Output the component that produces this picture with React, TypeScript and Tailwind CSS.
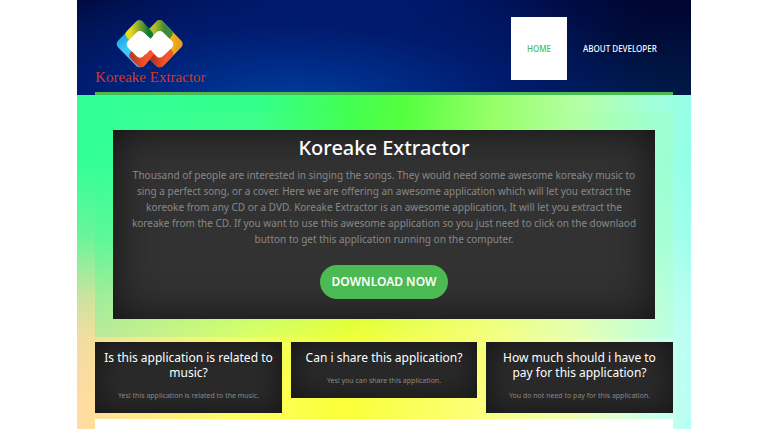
import React from "react";

const questions = [
  {
    title: "Is this application is related to music?",
    answer: "Yes! this application is related to the music.",
  },
  { title: "Can i share this application?", answer: "Yes! you can share this application." },
  {
    title: "How much should i have to pay for this application?",
    answer: "You do not need to pay for this application.",
  },
];

function Logo() {
  return (
    <a href="#home" className="mt-5 flex flex-col items-center" aria-label="Koreake Extractor">
      <svg viewBox="0 0 204 144" className="h-12 w-[68px]" aria-hidden="true">
        <defs>
          <linearGradient id="olive" x1="0" x2="1">
            <stop offset="0" stopColor="#e6dc1c" />
            <stop offset="0.55" stopColor="#78a030" />
            <stop offset="1" stopColor="#0d7a35" />
          </linearGradient>
          <linearGradient id="olive-right" x1="0" x2="1">
            <stop offset="0.2" stopColor="#b8c028" />
            <stop offset="0.8" stopColor="#3f8a34" />
          </linearGradient>
          <linearGradient id="sky" x1="0" x2="0.4" y1="0" y2="1">
            <stop offset="0.2" stopColor="#1e9bd4" />
            <stop offset="0.6" stopColor="#3cc8f8" />
          </linearGradient>
          <linearGradient id="red-left" x1="0" x2="1">
            <stop offset="0" stopColor="#c23a24" />
            <stop offset="0.7" stopColor="#f5552a" />
          </linearGradient>
          <linearGradient id="red-right" x1="0" x2="1">
            <stop offset="0.1" stopColor="#b83222" />
            <stop offset="0.8" stopColor="#f5552a" />
          </linearGradient>
          <linearGradient id="amber" x1="0" x2="1">
            <stop offset="0.6" stopColor="#ffc814" />
            <stop offset="1" stopColor="#e8a01c" />
          </linearGradient>
        </defs>
        <g strokeLinejoin="round" strokeWidth="28">
          <path d="M131 15L186 72L131 128L76 72Z" fill="url(#amber)" stroke="url(#amber)" />
          <path d="M131 15L156 40L131 74L104 42Z" fill="url(#olive-right)" stroke="url(#olive-right)" />
          <path d="M71 15L98 72L71 128L16 72Z" fill="url(#sky)" stroke="url(#sky)" />
          <path d="M131 74L158 101L131 128L104 101Z" fill="url(#red-right)" stroke="url(#red-right)" />
          <path d="M76 70L103 94L76 128L54 106Z" fill="url(#red-left)" stroke="url(#red-left)" />
          <path d="M70 15L97 44L71 74L43 43Z" fill="url(#olive)" stroke="url(#olive)" />
          <path d="M72 47L96 71L72 99L46 73Z" fill="#fff" stroke="#fff" />
          <path d="M131 47L158 73L131 99L108 73Z" fill="#fff" stroke="#fff" />
          <path d="M84 39L105 57L120 40V96L108 85L88 104Z" fill="#fff" />
        </g>
      </svg>
      <span className="font-['Liberation_Serif',serif] text-[15px] leading-[18px] text-[#d03a28]">
        Koreake Extractor
      </span>
    </a>
  );
}

function Header() {
  return (
    <header className="bg-[#000a38] bg-[radial-gradient(ellipse_62%_150%_at_35%_115%,#0042a0_0%,#002c88_30%,#001a6c_60%,#00105000_100%),radial-gradient(ellipse_50%_100%_at_44%_0%,#00186c_20%,#00105000_100%),linear-gradient(#000430,#001a48)] px-[3%]">
      <div className="flex justify-between border-b-[3px] border-[#4cba52] pb-1.5">
        <Logo />
        <nav className="mt-[17px] flex h-[63px] text-[8px] font-medium">
          <a href="#home" className="flex items-center bg-white px-4 text-[#4cba52]">
            HOME
          </a>
          <a href="#developer" className="flex items-center px-4 text-white">
            ABOUT DEVELOPER
          </a>
        </nav>
      </div>
    </header>
  );
}

function Hero() {
  return (
    <section className="mt-[17px] bg-[linear-gradient(90deg,#33ff9948,#66ff8830_25%,#ffff0000_45%,#ffff0000_70%,#a0ffa038)] px-[3%] py-[18px]">
      <div className="bg-[#323232] px-2.5 pt-1 pb-5 text-center shadow-[inset_0_0_40px_#121212]">
        <h1 className="text-[20px] leading-7 font-medium text-white">Koreake Extractor</h1>
        <p className="mt-[5px] text-[10px] leading-4 text-[#888]">
          Thousand of people are interested in singing the songs. They would need some awesome koreaky music to
          <br />
          sing a perfect song, or a cover. Here we are offering an awesome application which will let you extract the
          <br />
          koreoke from any CD or a DVD. Koreake Extractor is an awesome application, It will let you extract the
          <br />
          koreake from the CD. If you want to use this awesome application so you just need to click on the downlaod
          <br />
          button to get this application running on the computer.
        </p>
        <button
          type="button"
          className="mt-[18px] h-[34px] rounded-full bg-[#4cba52] px-3 text-[12px] font-semibold text-white"
        >
          DOWNLOAD NOW
        </button>
      </div>
    </section>
  );
}

export default function App() {
  return (
    <div className="min-h-screen bg-white font-['Noto_Sans',sans-serif]">
      <div className="mx-auto flex min-h-screen w-4/5 flex-col">
        <Header />
        <main className="relative isolate flex grow flex-col bg-[linear-gradient(95deg,#33ff99_0%,#33ff8c_28%,#44ff50_43%,#55ff40_51%,#98ff68_65%,#b4ffa4_78%,#a0ffdc_90%,#8cfff2_100%)] px-[3%] before:absolute before:inset-0 before:-z-10 before:bg-[linear-gradient(95deg,#ffd4aa_0%,#ffe690_12%,#ffff60_30%,#faff38_46%,#fcff74_65%,#f0ffb8_82%,#c8fff0_95%,#b8fff4_100%)] before:mask-[linear-gradient(transparent_20%,#0004_42%,#000b_60%,#000e_72%,#000_90%)]">
          <Hero />
          <section className="mt-[5px] grid grid-cols-3 items-start gap-[9px]">
            {questions.map((q) => (
              <article
                key={q.title}
                className="bg-[#2a2a2a] px-2 pt-2 pb-[9px] text-center shadow-[inset_0_0_28px_#141414]"
              >
                <h2 className="text-[12px] leading-[15px] text-white">{q.title}</h2>
                <p className="mt-2 text-[7px] leading-4 text-[#888]">{q.answer}</p>
              </article>
            ))}
          </section>
          <div className="mt-1.5 grow bg-white" />
        </main>
      </div>
    </div>
  );
}
